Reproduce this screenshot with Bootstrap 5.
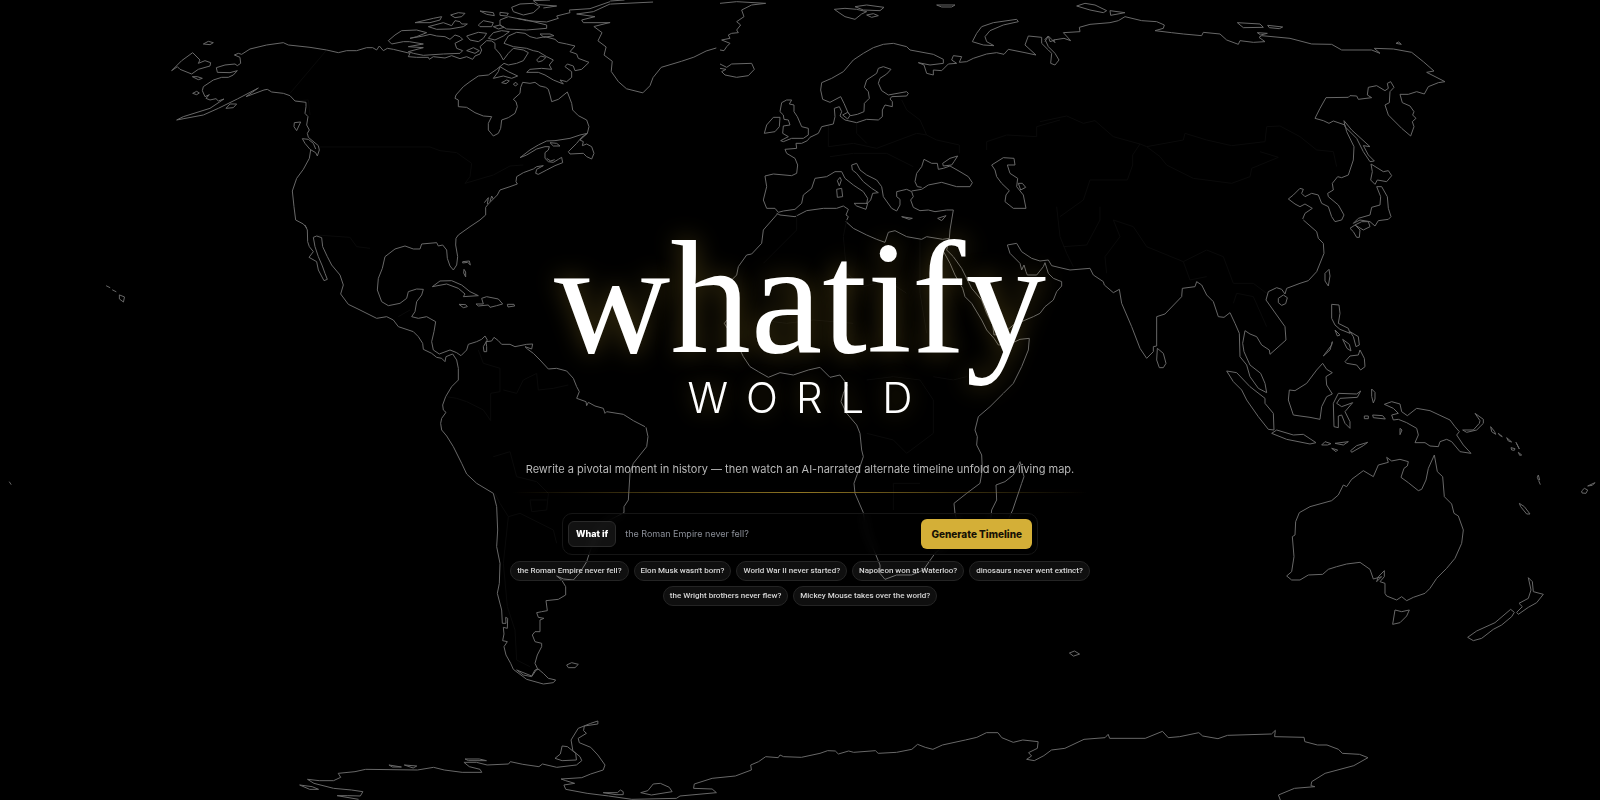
<!DOCTYPE html>
<html lang="en">
<head>
<meta charset="utf-8">
<meta name="viewport" content="width=device-width, initial-scale=1">
<title>Whatify World</title>
<link href="https://cdn.jsdelivr.net/npm/bootstrap@5.3.0/dist/css/bootstrap.min.css" rel="stylesheet">
<style>
body{background:#000;color:#fff;font-family:Inter,"Liberation Sans",sans-serif}
.world-map{z-index:0}
.world-map path{fill:none;vector-effect:non-scaling-stroke;stroke-linejoin:round}
.coast{stroke:#686868;stroke-width:1}
.borders{stroke:#0a0a0a;stroke-width:1}
.hero{z-index:1;padding-top:222px}
.wordmark{font-family:"Liberation Serif",serif;font-size:161px;line-height:152px;text-shadow:0 0 24px rgba(212,175,55,.32)}
.wordmark-sub{font-weight:300;font-size:42px;line-height:48px;letter-spacing:18px;padding-left:18px;text-shadow:0 0 20px rgba(212,175,55,.3)}
.tagline{font-size:11px;line-height:18px;color:#b8b8b8;margin-top:38px}
.rule{width:576px;max-width:100%;height:1px;margin-top:14px;background:linear-gradient(90deg,transparent,#8f7522 50%,transparent);box-shadow:0 0 12px rgba(212,175,55,.08)}
.ask{width:476px;max-width:100%;margin-top:20px;padding:5px;border:1px solid #151515;border-radius:10px;background:rgba(0,0,0,.6);backdrop-filter:blur(5px)}
.ask-prefix{font-size:9px;line-height:16px;font-weight:800;padding:4px 7px;border:1px solid #2a2a2a;border-radius:6px;background:rgba(255,255,255,.07)}
.ask-input,.ask-input:focus{font-size:9px;line-height:16px;background:transparent;color:#fff;border:0;box-shadow:none;padding:4px 9px}
.ask-input::placeholder{color:#8b8f98;opacity:1}
.ask-go,.ask-go:hover{font-size:10px;line-height:16px;font-weight:800;padding:7px 10px;border-radius:6px;background:#d4af37;color:#171204}
.ideas{width:600px;max-width:100%;gap:5px;margin-top:6px}
.idea,.idea:hover{font-family:Roboto,sans-serif;font-weight:500;font-size:8px;line-height:12px;color:#d6d6d6;padding:3px 6px;border:1px solid #242424;background:rgba(255,255,255,.06)}
</style>
</head>
<body class="min-vh-100 overflow-hidden">
<svg class="world-map position-fixed top-0 start-0 w-100 h-100" viewBox="0 0 1600 800" preserveAspectRatio="xMidYMid slice" aria-hidden="true">
<!-- North America and the Arctic islands -->
<g transform="translate(150 0) scale(.33333)">
<path class="borders" d="M510,441H840L870,452 920,458 965,490 960,530 945,550 1030,525 1080,498 1120,495M530,150L420,280M437,303L475,300 480,345M500,705L600,712 620,740 660,745"/>
<path class="coast" d="M80,360L160,345 205,325 262,297 325,264 288,290 342,270 352,268 365,276 400,280 420,287 435,303 468,307 468,320 465,340 474,350 470,375 478,390 472,400 475,412 505,437 508,450 502,468 497,458 480,448 465,430 457,416 475,418 490,430 497,447M482,450L478,475 460,508 440,535 427,573 432,620 437,660 460,672 470,684"/>
<path class="coast" d="M80,360L100,350 180,325 222,297 205,303 198,296 180,300 168,295 178,284 165,290 157,272 160,260 190,240 215,232 235,232 250,225 262,212 240,218 202,217 199,203 225,195 255,192 262,197 272,190 270,172 253,165 265,160 275,163 300,147 350,135 400,128 415,135 480,142 530,150 565,158 590,152 620,152 650,143 668,143 680,150 688,138 700,152 712,145 730,148 780,160 775,170 800,172 835,172 838,178 850,170 885,174 905,167 930,176 950,170 968,178 975,168 990,162 995,150 990,140 1010,122 1025,123 1035,130 1035,145 1050,162 1060,180 1075,160 1090,145 1120,150 1135,158 1120,182 1100,190 1075,195 1062,190 1040,208 1015,225 985,228 960,245 940,260 918,285 915,295 925,300 925,320 950,322 975,338 1000,348 1025,350 1015,370 1015,390 1030,408 1045,400 1052,385 1055,360 1075,353 1095,340 1102,320 1098,305 1090,298 1110,280 1112,262 1118,247 1140,250 1155,247 1170,258 1187,262 1195,268 1200,285 1205,305 1225,298 1252,276 1265,310 1268,330 1285,347 1310,360 1317,380 1312,400 1290,405 1260,415 1215,422 1190,423 1165,435 1140,450 1110,473 1130,465 1160,447 1185,440 1198,440 1195,450 1185,458 1185,475 1195,485 1210,487 1225,478 1235,472 1238,488 1215,497 1190,510 1165,523 1157,520 1160,508 1180,497 1160,500 1150,507 1120,518 1100,530 1098,545 1102,552 1080,560 1050,570 1042,585 1030,597 1015,612 1007,622 1007,645 990,660 960,680 925,705 918,715 917,735"/>
<path class="coast" d="M1312,400L1295,412 1280,430 1255,455 1260,462 1300,460 1310,470 1325,477 1332,460 1325,440 1310,432 1297,437 1300,425 1290,420zM1200,428l20,2 10,8 -20,0zM1190,475l12,8 12,-4"/>
<path class="coast" d="M715,122L735,105 755,92 800,90 830,98 800,110 780,115 820,108 840,103 860,108 885,110 900,118 915,105 930,110 938,118 915,130 920,145 938,152 930,160 880,162 820,166 790,160 775,155 820,143 775,140 820,132 778,125 760,125 725,132zM795,68L850,55 875,50 870,60 840,68zM835,80L880,68 905,77 915,62 930,65 935,72 952,72 940,80 900,87 860,88zM902,45L925,38 945,40 935,50 915,53zM985,75L1000,62 1030,68 1025,80 990,80zM990,33L1030,38 1033,47 1010,43zM1050,37l25,3 -5,8 -20,-2zM1030,80L1050,75 1062,82 1045,87zM950,108L985,97 1010,100 1000,115 985,125 960,120zM1015,115L1030,98 1055,92 1078,95 1060,108 1035,120zM950,152L970,143 988,152 975,160z"/>
<path class="coast" d="M1062,130L1075,108 1100,97 1125,100 1140,110 1160,115 1185,110 1215,118 1225,127 1250,132 1275,138 1260,155 1280,162 1285,175 1317,187 1295,208 1275,212 1270,198 1252,192 1245,200 1265,215 1265,232 1250,245 1230,240 1240,252 1210,240 1185,225 1165,217 1130,217 1140,208 1175,205 1205,208 1198,195 1210,180 1190,170 1165,155 1150,152 1130,145 1090,140zM1160,180L1172,168 1188,172 1178,182 1165,186zM1050,200L1075,215 1103,228 1085,235 1060,228 1030,235 1045,215zM1055,248l15,-8 8,3 -10,8zM1090,252l8,-5 5,6 -7,5z"/>
<path class="coast" d="M1085,22L1110,12 1150,10 1170,20 1150,38 1120,45 1090,35zM1200,0L1150,2 1165,14 1220,18 1180,24M1050,60L1075,50 1100,55 1130,60 1190,75 1190,85 1130,90 1070,87 1050,75zM1170,102l30,0 12,5 -30,5zM1100,55L1130,62 1190,66 1225,55 1220,48 1260,38 1258,30 1320,26 1380,5M1380,12L1330,35 1280,42 1335,50 1295,60 1300,68 1380,68"/>
<path class="coast" d="M160,132L175,124 190,128 180,134zM65,212L95,182 128,158 150,180 145,190 165,182 182,188 180,198 145,208 125,222 90,208 82,200zM127,230l15,0 15,5 -12,4zM128,280l12,-6 8,5 -8,5zM228,325L240,312 260,312 250,323zM433,368L452,366 440,392 432,380zM1003,608L1015,593 1012,612M1020,605L1025,588 1030,597"/>
</g>
<!-- Greenland, Hawaii and the small islands of the southern oceans -->
<g transform="scale(1.0204)">
<path class="coast" d="M598,4L640,2 M598,1L612,0M598,22L582,26 590,32 586,40 594,46 592,54 600,60 599,70 606,80 614,87 630,91 637,84 640,76 648,66 668,60 680,56 692,50 702,47M104,280l4,2M110,284l4,2M117,289l5,2 -1,5 -4,-3zM9,472l2,3M1048,640l5,-2 5,3 -6,2z"/>
</g>
<!-- Mexico, Central America and the Caribbean -->
<g transform="translate(270 150) scale(.33333)">
<path class="borders" d="M385,500L420,480M530,740L560,745 590,755 640,780 662,812 662,730 690,725 690,655 640,640 625,600M700,720L740,730 760,690 800,670 805,720 850,715 895,705"/>
<path class="coast" d="M105,225L112,240 113,275 118,290 130,305 117,322 140,335 145,360 162,392 172,388 165,370 157,348 145,320 135,290 130,262 140,258 155,263 158,290 172,320 185,345 210,375 220,405 212,432 235,463 270,480 320,505 350,500 370,510 385,530 430,545 445,560 458,580 460,598 485,610 500,622 515,625 525,635 528,620 548,612 560,630 565,655 565,690 545,710 527,740 518,765 520,780 528,787 515,805 512,820 515,840"/>
<path class="coast" d="M557,285L563,320 560,345 550,360 540,348 532,325 530,300 518,285 505,288 500,278 455,282 450,297 430,297 405,288 375,297 345,320 337,355 325,385 322,420 335,455 355,467 390,460 410,445 415,425 440,417 460,418 455,435 440,455 435,485 425,500 445,505 470,500 497,515 492,545 485,575 490,600 508,612 540,600 560,608 573,617 590,600 595,583 620,575 635,568 645,558 652,570 640,590 642,605 650,605 650,590 648,575 665,573 672,562 685,572 695,583 720,583 735,590 770,583 788,582 785,597 765,590 772,597 790,610 810,630 835,657 860,655 890,663 910,685 920,710 928,725 920,745 948,755 950,767 955,757 975,768 1000,775 1005,790 1010,785 1060,793 1090,812 1125,830"/>
<path class="coast" d="M487,410L510,393 545,392 575,405 600,425 625,437 580,440 585,432 565,415 530,402zM618,462L640,462 635,445 650,440 685,447 698,462 680,467 660,472 655,465 625,468zM567,463l20,1 5,6 -12,3zM712,463h20l2,5 -20,3zM578,335l20,-2 3,12 -8,-8 -15,2zM582,358l5,8 0,15 -6,-12z"/>
</g>
<!-- South America -->
<g transform="translate(420 330) scale(.33333)">
<path class="borders" d="M220,380L270,365 290,440 350,455 385,490 380,540 335,545 330,510 380,510M225,490L240,520 265,560 250,700 262,830 285,900 290,990 330,1010M265,560L300,550 400,600 410,640"/>
<path class="coast" d="M65,300L80,318 100,350 125,400 140,432 170,460 220,490 230,530 233,600 230,650 240,700 238,760 232,790 245,840 247,880 258,880 257,862 263,865 262,895 250,892 252,912 248,932 262,935 252,950 258,975 272,1000 280,1018 320,1048 370,1062 400,1058 407,1050 385,1045 370,1030 352,1015 345,1000 352,975 365,950 365,940 345,935 337,915 345,905 360,905 360,870 372,865 355,862 350,848 365,845 382,842 378,812 415,808 437,795 437,770 425,750 410,738 430,747 460,750 480,728 500,695 508,670 530,610 560,575 612,548 612,530 625,510 630,430 640,400 680,350 684,320 678,292M290,1020L335,1038 345,1020 358,1018M290,1020L310,1035 335,1040 352,1015M440,1005L455,998 475,1003 465,1013 445,1013z"/>
</g>
<!-- Europe -->
<g transform="translate(720 0) scale(.33333)">
<path class="borders" d="M325,378L325,440 400,430 470,445 590,400 620,405 650,420 718,435 718,460M545,300L560,330 600,360 620,405M410,370L410,400 440,430M800,450L800,425 860,405 950,410 950,380 1020,360M330,470L400,460 500,460 580,500"/>
<path class="coast" d="M0,10L50,5 137,10 95,15 65,30 72,50 50,65 62,75 50,90 55,98 35,100 25,105 30,115 5,120 30,130 20,140 12,152 0,150M0,192L20,202 35,192 95,190 103,208 85,227 50,232 15,225 5,215 18,208 0,205M343,28L375,25 410,28 440,35 425,42 405,58 375,50 360,40zM405,20L440,15 492,22 480,32 430,30zM440,45l20,-4 15,6 -20,5zM650,15l55,0 -10,6 -30,0zM757,125L770,100 785,80 820,68 890,58 895,65 850,75 810,92 795,110 800,125 822,137 790,135z"/>
<path class="coast" d="M948,165L915,158 865,148 852,163 830,158 800,162 760,175 740,185 718,187 725,170 700,167 695,180 710,190 685,192 665,212 640,210 640,225 620,220 612,195 595,188 630,195 670,190 670,178 640,163 570,150 560,140 520,130 490,133 460,143 430,160 400,180 370,215 335,235 305,248 302,270 308,298 330,307 362,290 372,310 385,340 392,347 412,343 432,335 433,310 448,295 445,275 433,262 440,240 470,220 475,205 490,200 513,208 500,222 480,235 475,250 485,272 505,285 560,275 565,280 560,288 515,290 510,297 517,305 517,320 495,315 487,330 487,350 475,360 440,358 410,368 375,360 360,348 365,335 358,320 343,325 345,350 340,372 305,380 295,400 270,412 262,422 245,430 228,430 230,445 195,448 200,460 225,475 233,495 230,520 215,527 160,522 135,528 140,560 130,600 140,625 165,625 175,637 190,633 225,628 245,610 250,585 275,565 285,535 320,530 345,515 365,515 375,535 400,555 430,575 443,595 440,612 452,600 458,580 475,578 455,565 430,545 410,520 397,510 395,495 410,490 420,510 440,525 470,540 485,560 490,590 515,625 530,633 540,615 540,598 530,590 530,575 560,568 575,575 580,590 572,600 580,622 600,632 625,630 645,635 680,630 700,630 695,660 690,690 688,715 668,718 620,710 605,718 560,710 525,692 505,697 495,727 470,718 440,705 400,685 378,665 385,650 378,645 385,628 370,618 350,625 310,625 260,632 225,650 180,645 170,640"/>
<path class="coast" d="M402,610L443,610 438,628 410,618zM350,568L365,565 368,590 352,592zM352,542l8,-10 4,8 -6,18zM545,650l32,5 -10,3zM653,655L678,647 665,662zM575,573L605,568 625,555 665,547 710,560 750,560 757,548 745,530 720,515 690,498 670,505 655,508 652,490 635,490 612,478 605,500 590,520 585,545 592,560 605,562M668,490L690,475 713,468 702,485 695,495 670,498zM368,345l15,-8 8,8 -8,12z"/>
<path class="coast" d="M200,300L215,300 208,312 222,315 222,335 232,350 245,380 265,385 265,405 250,415 215,415 190,425 182,422 205,410 188,400 190,378 210,375 205,360 192,358 190,345 180,335 185,308zM133,400L140,375 160,352 180,352 178,380 165,395zM815,495L850,473 882,475 885,495 862,495 870,520 893,535 890,560 910,585 918,625 880,625 855,605 858,585 868,572 845,550 830,530 825,510zM895,550l12,0 10,12 -15,8z"/>
<path class="coast" d="M862,735L890,730 905,755 935,775 960,783 985,780 995,797 1020,803M862,735L870,760 900,790 905,810 912,795 918,815 922,825 950,825 970,800 975,788M948,165L915,135 925,108 965,112 965,130 985,150 995,160 992,190 1005,195 1017,180 1005,160 985,140 975,118 985,108 990,125 1005,120"/>
</g>
<!-- Africa and Arabia -->
<g transform="translate(720 200) scale(.33333)">
<path class="borders" d="M380,60L370,110 380,220 430,260 500,240 560,280M230,40L230,90 130,190M600,120L600,280 620,400M120,360L200,370 280,360 400,370M440,540L520,530 600,540 640,600 640,700 560,760 520,720 440,700M520,930L520,850 600,850M640,530L700,540 740,530"/>
<path class="coast" d="M172,42L130,90 125,130 95,162 80,165 55,200 50,225 30,245 25,270 35,290 32,325 25,355 13,370 25,390 35,425 60,450 70,470 90,500 115,515 145,532 180,518 220,525 265,510 300,502 330,532 360,525 375,545 382,555 370,580 363,605 380,640 410,675 420,700 425,750 430,770 420,800 402,850 405,880 430,938 440,1000 465,1058 480,1095 480,1120 495,1138 530,1125 575,1125 610,1110 645,1060 690,1020 715,980 705,940 702,910 740,880 780,850 787,810 785,765 770,735 772,710 765,690 775,650 810,620 850,580 880,550 905,500 925,450 928,415 900,418 870,432 835,435 822,415 800,390 785,360 755,310 735,290 728,265 705,225 690,190 668,150 660,135M688,115L680,150 700,170 725,205 755,265 785,300 800,340 818,375 822,405 850,400 880,375 940,350 960,340 975,320 1000,300 1010,275 1025,258 1025,245 1000,235 985,220 975,188M900,785L912,830 905,850 878,930 860,970 830,985 812,960 815,930 830,900 828,855 855,845 880,825z"/>
</g>
<!-- Russia, China and Japan -->
<g transform="translate(1040 0) scale(.33333)">
<path class="borders" d="M0,365L80,348 130,370 165,362 220,410 300,432 320,440 430,420 435,400 500,420 575,437 675,425 680,380 720,378 780,410 830,450 880,455 890,500M320,440L360,470 380,495 460,535 575,550 630,530 635,505 715,472 660,455M300,432L278,465 278,495 262,540 150,540 130,600 60,650"/>
<path class="coast" d="M15,125L25,108 35,118 45,128 40,120 72,115 92,122 70,98 120,95 118,82 150,73 210,68 235,62 255,50 305,62 350,65 373,75 370,85 345,92 395,98 430,102 485,107 490,97 540,102 560,120 595,133 600,122 640,127 675,125 657,112 665,107 750,115 815,132 875,133 905,150 995,150 1020,160 1003,145 1060,147 1115,157 1150,185 1182,213 1160,217 1215,245 1195,248 1165,260 1153,282 1130,275 1105,283 1080,283 1087,308 1110,318 1122,335 1118,345 1128,355 1117,365 1122,380 1112,408 1085,385 1045,345 1035,315 1048,308 1050,275 1062,262 1052,245 1042,250 1045,265 1035,272 1010,257 985,262 982,285 995,293 955,298 950,288 930,287 925,292 858,293 840,325 825,355 850,362 867,370 880,363 915,375 920,395 942,440 940,480 925,525 905,533 893,530 877,550 880,570 863,580 865,590 895,615 912,645 905,660 885,665 875,650 865,620 845,610 835,585 815,580 795,590 785,580 790,568 780,565 760,585 745,597 765,612 780,620 795,612 817,625 795,640 788,657"/>
<path class="coast" d="M912,362L935,390 990,440 970,437 985,465 1003,483 990,485 970,455 950,415 915,380zM993,492L1030,515 1045,512 1055,527 1040,545 1012,540 1005,553 992,540 997,515zM1010,560L1025,560 1042,590 1045,625 1053,650 1045,658 1015,662 1005,678 990,665 960,660 940,670 955,655 990,645 995,622 1020,615 1022,590zM945,675L965,665 985,665 990,680 970,690zM930,685L945,675 960,690 958,712 950,712 940,695zM110,18L135,10 165,15 200,32 190,38 150,30zM210,32L255,38 212,46zM592,68L660,72 670,82 610,83zM683,76l45,5 -10,5 -30,-3zM652,98l30,2 -20,5zM1068,130l8,-4 8,7z"/>
</g>
<!-- India and South-East Asia -->
<g transform="translate(1020 170) scale(.33333)">
<path class="borders" d="M110,110L120,200 140,250 160,290M130,230L200,225 240,150 240,110M260,310L255,260 300,200 280,150 340,170 380,230 490,275 560,240 610,260 640,340 700,340 740,370M490,275L510,330 560,320M640,400L650,370 700,380 740,470"/>
<path class="coast" d="M120,293L150,300 210,295 220,315 250,335 253,345 280,368 298,358 305,400 335,470 360,535 380,565 400,545 400,530 410,528 410,440 435,432 485,380 487,355 525,350 530,335 545,345 560,375 580,395 595,440 612,442 630,428 645,460 658,490 660,560 680,585 690,620 715,655 740,668 735,640 722,610 690,585 672,545 668,520 675,482 690,492 710,500 725,525 748,540 750,553 798,510 795,470 770,435 738,390 745,365 770,353 785,358 795,372 800,355 840,340 865,332 890,305 912,250 910,220 895,205 890,185 850,150M412,535L430,550 438,580 430,593 418,593 410,570zM775,385l15,-10 12,8 -5,18 -12,5 -10,-8zM915,310l12,-12 3,20 -5,30 -10,-15zM620,603L650,608 690,650 735,685 735,700 760,730 762,780 745,778 715,740 680,690 665,660 640,635zM755,790L770,780 820,795 850,793 888,818 870,822 800,808zM808,660L825,662 860,640 890,600 908,580 920,598 937,608 918,620 920,645 937,672 920,680 905,710 900,748 870,742 840,738 820,735 805,690z"/>
<path class="coast" d="M935,403L957,405 960,430 955,460 985,475 990,490 960,478 945,465 935,445zM945,480l15,15 -8,3zM968,508l20,15 5,20 -12,-8zM990,485l25,15 3,25 -10,5 -8,-30zM975,575L990,558 1015,555 1020,540 1033,565 1035,590 1022,600 1010,585 980,580zM910,558L935,525 937,515 930,540zM940,700L955,670 1010,672 1022,663 1012,682 960,685 950,700 965,710 998,698 975,725 990,755 990,775 975,760 965,735 955,738 955,773 942,770zM1055,657l10,10 0,20 -5,12 -5,-20zM1058,735l30,2 8,10 -36,-4zM1033,738h12v8h-12z"/>
</g>
<!-- Australia, New Guinea and New Zealand -->
<g transform="translate(1200 380) scale(.33333)">
<path class="coast" d="M553,73L575,65 600,72 605,95 622,107 650,85 690,92 750,120 765,140 778,155 770,165 790,195 813,220 780,215 755,185 740,178 720,185 715,200 690,198 675,188 645,188 655,165 650,145 620,128 595,118 580,120 575,105 595,100 580,85zM788,150L820,150 838,130 840,122 825,100 850,118 850,130 830,150 800,157zM872,140l12,15 3,8 -12,-8zM895,160l12,10 -8,-4zM920,173l15,13 -10,-3zM948,187l10,20zM933,203l12,3 -2,5 -8,-1zM955,217l10,8 -6,1zM1015,285l4,15 -4,0 -3,-8zM1016,302l5,12M958,370l15,10 17,22 -10,0 -18,-22zM1145,333l8,-8 10,5 -5,10 -12,-1zM1163,318l22,-10 -8,8zM365,195l10,-10 18,6 -10,4zM405,190l40,-5 -15,10zM395,205l18,5 -5,5zM452,212L470,197 503,187 490,197 455,217zM600,145l6,5 -6,14z"/>
<path class="coast" d="M560,232L575,243 600,238 625,245 622,258 612,265 603,292 625,308 655,332 665,328 678,300 685,265 703,225 712,275 728,290 733,350 755,372 762,400 775,408 790,450 785,490 765,535 740,565 710,595 690,625 675,640 640,652 620,662 605,650 590,660 560,648 555,640 555,610 540,605 553,590 553,572 535,590 530,605 545,590 520,597 510,568 480,547 440,552 410,560 385,568 368,583 325,585 300,600 275,600 260,588 275,575 282,530 277,470 285,465 287,425 298,398 330,380 395,362 415,345 430,315 440,320 455,298 490,272 520,290 535,255 565,247zM585,690L605,695 628,690 620,708 600,728 578,733zM985,593L997,605 1000,635 1030,643 1010,668 985,682 955,703 950,697 967,680 957,670 985,655 993,630zM932,688L943,697 935,710 905,735 880,748 845,775 820,782 803,772 830,753 885,728z"/>
</g>
<!-- Antarctica -->
<g transform="translate(280 690) scale(.35714 .33333)">
<path class="coast" d="M220,328L160,317 190,317 225,318 232,305 200,300 150,295 95,280 77,268 110,272 150,272 170,262 163,250 210,245 240,238 385,240 430,232 460,240 510,247 565,247 560,238 530,230 515,217 550,217 580,225 640,222 645,215 680,223 725,230 735,222 775,232 830,225 845,212 840,200 820,182 815,150 835,115 870,100 890,93 890,102 852,108 850,122 858,130 835,145 838,158 870,172 890,195 910,225 905,240 870,252 845,263 787,267 800,272 825,280 795,285 800,298 860,310 920,318 985,328 1110,325 1120,318 1222,308 1210,297 1158,295 1160,282 1210,265 1275,258 1320,240 1318,225 1340,215 1360,200 1395,203 1400,195 1410,200 1460,202 1512,190M790,168L785,192 770,205 790,212 830,210 828,190 805,170zM55,285l35,5 18,8 -25,0zM305,225l35,6 -25,0zM348,225l35,3 -10,6zM518,207l40,0 20,5 -50,0zM905,308h40l8,-8 8,5v9h-20zM1010,308L1030,302 1045,282 1065,280 1090,292 1098,305 1040,315z"/>
</g>
<g transform="translate(820 690) scale(.38265 .33333)">
<path class="coast" d="M0,190L20,182 40,183 48,192 75,183 88,187 145,182 152,190 200,187 240,178 255,163 275,172 295,178 320,165 380,150 410,142 435,128 465,128 475,143 505,157 530,150 570,155 568,175 545,188 553,198 540,208 560,212 585,197 605,180 640,175 690,148 745,143 753,133 757,145 850,145 895,124 910,143 940,140 990,128 1000,138 1040,146 1065,136 1180,132 1190,121 1188,140 1265,142 1267,155 1300,165 1325,165 1355,178 1365,190 1410,193 1432,203 1395,227 1320,250 1285,275 1283,287 1293,290 1240,295 1198,315 1203,330"/>
</g>
</svg>

<main class="hero container-fluid position-relative d-flex flex-column align-items-center text-center">
  <h1 class="m-0 d-flex flex-column align-items-center fw-normal">
    <span class="wordmark">whatify</span>
    <span class="wordmark-sub">WORLD</span>
  </h1>
  <p class="tagline mb-0">Rewrite a pivotal moment in history — then watch an AI-narrated alternate timeline unfold on a living map.</p>
  <div class="rule"></div>
  <form class="ask d-flex align-items-center" onsubmit="return false">
    <label class="ask-prefix flex-shrink-0" for="scenario">What if</label>
    <input class="ask-input form-control flex-grow-1" id="scenario" type="text" placeholder="the Roman Empire never fell?">
    <button class="ask-go btn border-0 flex-shrink-0" type="submit">Generate Timeline</button>
  </form>
  <div class="ideas d-flex flex-wrap justify-content-center">
    <button class="idea btn rounded-pill" type="button">the Roman Empire never fell?</button>
    <button class="idea btn rounded-pill" type="button">Elon Musk wasn't born?</button>
    <button class="idea btn rounded-pill" type="button">World War II never started?</button>
    <button class="idea btn rounded-pill" type="button">Napoleon won at Waterloo?</button>
    <button class="idea btn rounded-pill" type="button">dinosaurs never went extinct?</button>
    <button class="idea btn rounded-pill" type="button">the Wright brothers never flew?</button>
    <button class="idea btn rounded-pill" type="button">Mickey Mouse takes over the world?</button>
  </div>
</main>
<script src="https://cdn.jsdelivr.net/npm/bootstrap@5.3.0/dist/js/bootstrap.bundle.min.js"></script>
</body>
</html>
